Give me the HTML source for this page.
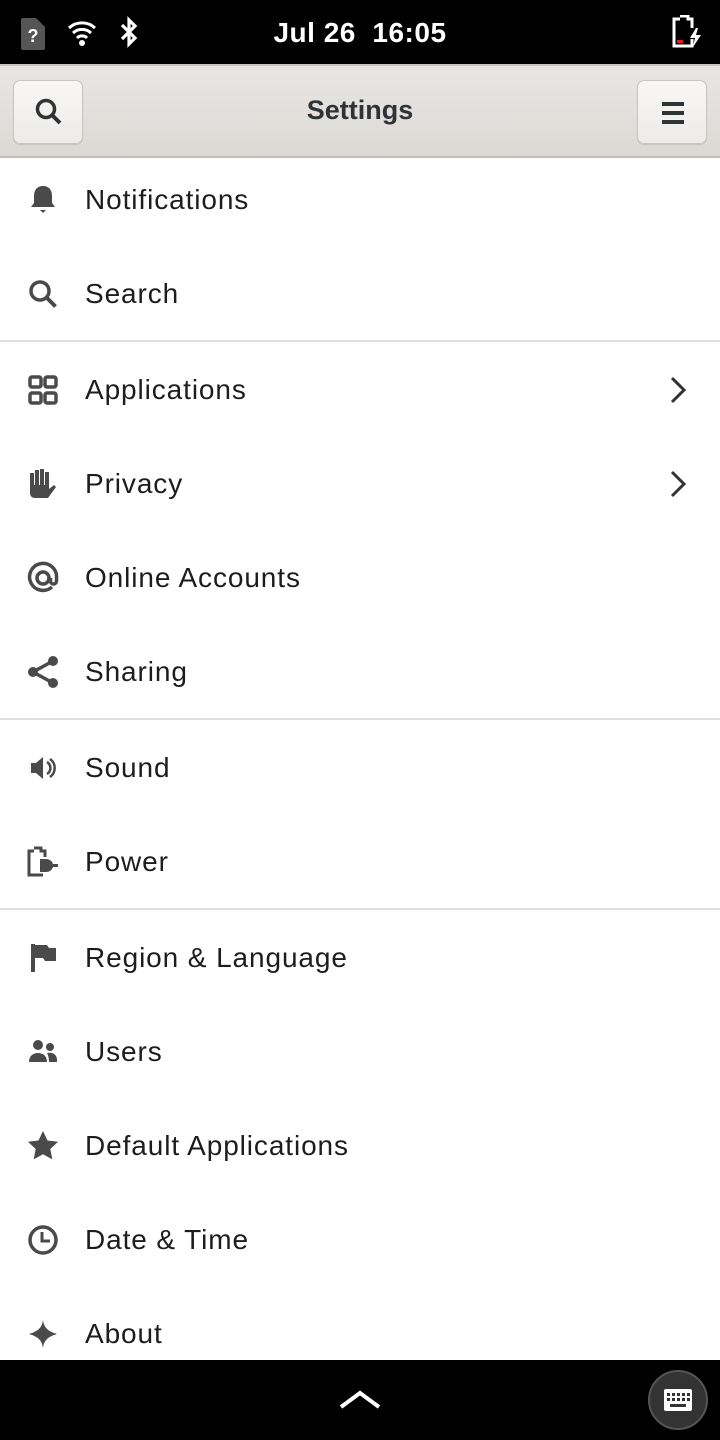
<!DOCTYPE html>
<html><head><meta charset="utf-8"><style>
*{margin:0;padding:0;box-sizing:border-box}
body{width:720px;height:1440px;overflow:hidden;background:#fff;font-family:"Liberation Sans","DejaVu Sans",sans-serif;position:relative;color:#1d1d1d}
.sb{position:absolute;left:0;top:0;width:720px;height:64px;background:#000;color:#fff}
.hb{position:absolute;left:0;top:64px;width:720px;height:94px;background:linear-gradient(#e8e6e3,#dcd9d5);border-top:2px solid #c9c6c2;border-bottom:2px solid #c0bcb7}
.btn{position:absolute;top:14px;width:70px;height:64px;border:1px solid #c9c5c0;border-radius:7px;background:linear-gradient(#f8f7f6,#ecebe9);box-shadow:0 1px 1px rgba(0,0,0,.1)}
.row{position:absolute;left:0;width:720px;height:94px}
.row span{position:absolute;left:85px;top:50%;transform:translateY(-50%);font-size:28px;letter-spacing:.9px}
.row svg{position:absolute;left:26px;top:50%;transform:translateY(-50%)}
.sep{position:absolute;left:0;width:720px;height:2px;background:#dedede}
.chev{position:absolute;left:668px!important}
.bb{position:absolute;left:0;top:1360px;width:720px;height:80px;background:#000}
</style></head><body>
<div class="sb">
<svg width="24" height="32" style="position:absolute;left:21px;top:18px" viewBox="0 0 24 32"><path d="M5 0h10l9 9v21a2 2 0 0 1-2 2H2a2 2 0 0 1-2-2V2a2 2 0 0 1 2-2z" fill="#555"/><text x="12" y="24" font-size="18" font-weight="bold" fill="#fff" text-anchor="middle" font-family="Liberation Sans">?</text></svg>
<svg width="30" height="28" style="position:absolute;left:67px;top:19px" viewBox="0 0 30 28"><path d="M2 9a19 19 0 0 1 26 0M6 14a13 13 0 0 1 18 0M10 19a7 7 0 0 1 10 0" stroke="#fff" stroke-width="3" fill="none"/><circle cx="15" cy="24" r="3" fill="#fff"/></svg>
<svg width="22" height="32" style="position:absolute;left:118px;top:16px" viewBox="0 0 22 32"><path d="M4 9l13 13-6 6V4l6 6-13 13" stroke="#fff" stroke-width="3.2" fill="none"/></svg>
<div style="position:absolute;left:0;width:720px;text-align:center;top:17px;font-size:28px;font-weight:bold;letter-spacing:.5px">Jul 26&nbsp; 16:05</div>
<svg width="32" height="34" style="position:absolute;left:672px;top:15px" viewBox="0 0 32 34"><path d="M8 1h8v3h4v9M20 24v7H2V4h6" stroke="#fff" stroke-width="3" fill="none"/><rect x="5" y="25" width="6" height="3" fill="#e01b24"/><path d="M24 13l-6 10h5l-2 9 8-12h-5l2-7z" fill="#fff"/></svg>
</div>
<div class="hb">
<div class="btn" style="left:13px"><svg width="30" height="30" style="position:absolute;left:20px;top:16px" viewBox="0 0 30 30"><circle cx="12" cy="12" r="8.5" stroke="#2e3436" stroke-width="3.5" fill="none"/><path d="M18 18l8 8" stroke="#2e3436" stroke-width="4"/></svg></div>
<div style="position:absolute;left:0;width:720px;text-align:center;top:29px;font-size:27px;font-weight:bold;color:#2e3436">Settings</div>
<div class="btn" style="left:637px"><svg width="24" height="24" style="position:absolute;left:23px;top:20px" viewBox="0 0 24 24"><path d="M1 3h22M1 12h22M1 21h22" stroke="#2e3436" stroke-width="4"/></svg></div>
</div>

<div class="row" style="top:153px"><svg width="34" height="34" viewBox="0 0 34 34"><path d="M17 3c-6 0-9 4-9 10v7l-3 4h24l-3-4v-7c0-6-3-10-9-10z" fill="#4a4a4a"/><path d="M14 27h6l-3 3z" fill="#4a4a4a"/></svg><span>Notifications</span></div>
<div class="row" style="top:247px"><svg width="34" height="34" viewBox="0 0 34 34"><circle cx="14" cy="14" r="9" stroke="#4a4a4a" stroke-width="3.5" fill="none"/><path d="M20.5 20.5l9 9" stroke="#4a4a4a" stroke-width="4"/></svg><span>Search</span></div>
<div class="sep" style="top:340px"></div>
<div class="row" style="top:343px"><svg width="34" height="34" viewBox="0 0 34 34"><g stroke="#4a4a4a" stroke-width="3.5" fill="none"><rect x="4" y="4" width="11" height="10" rx="2"/><rect x="19" y="4" width="11" height="10" rx="2"/><rect x="4" y="20" width="11" height="10" rx="2"/><rect x="19" y="20" width="11" height="10" rx="2"/></g></svg><span>Applications</span><svg class="chev" width="20" height="30" viewBox="0 0 20 30"><path d="M4 3l12 12-12 12" stroke="#333" stroke-width="3" fill="none"/></svg></div>
<div class="row" style="top:437px"><svg width="34" height="34" viewBox="0 0 34 34"><path d="M4 6h4v12h1V3h4v15h1V2h4v16h1V5h4v17l5-4 2 2-8 11H9c-3 0-5-2-5-5z" fill="#4a4a4a"/></svg><span>Privacy</span><svg class="chev" width="20" height="30" viewBox="0 0 20 30"><path d="M4 3l12 12-12 12" stroke="#333" stroke-width="3" fill="none"/></svg></div>
<div class="row" style="top:531px"><svg width="34" height="34" viewBox="0 0 34 34"><path d="M26 26A13.5 13.5 0 1 1 30.5 17v3a3 3 0 0 1-6 0v-3" stroke="#4a4a4a" stroke-width="3.5" fill="none"/><circle cx="17" cy="17" r="6" stroke="#4a4a4a" stroke-width="3.5" fill="none"/></svg><span>Online Accounts</span></div>
<div class="row" style="top:625px"><svg width="34" height="34" viewBox="0 0 34 34"><path d="M7 17L27 6M7 17l20 11" stroke="#4a4a4a" stroke-width="3.5"/><circle cx="7" cy="17" r="5" fill="#4a4a4a"/><circle cx="27" cy="6" r="5" fill="#4a4a4a"/><circle cx="27" cy="28" r="5" fill="#4a4a4a"/></svg><span>Sharing</span></div>
<div class="sep" style="top:718px"></div>
<div class="row" style="top:721px"><svg width="34" height="34" viewBox="0 0 34 34"><path d="M5 12h5l7-6v22l-7-6H5z" fill="#4a4a4a"/><path d="M21 11a7 7 0 0 1 0 12M24 8a11 11 0 0 1 0 18" stroke="#4a4a4a" stroke-width="2.5" fill="none"/></svg><span>Sound</span></div>
<div class="row" style="top:815px"><svg width="34" height="34" viewBox="0 0 34 34"><path d="M8 3h7v3h4v6M17 30H3V6h5" stroke="#4a4a4a" stroke-width="3" fill="none"/><path d="M14 14h6a7 7 0 0 1 7 5h5v3h-5a7 7 0 0 1-7 5h-6z" fill="#4a4a4a"/></svg><span>Power</span></div>
<div class="sep" style="top:908px"></div>
<div class="row" style="top:911px"><svg width="34" height="34" viewBox="0 0 34 34"><path d="M5 3h4v28H5z" fill="#4a4a4a"/><path d="M9 4h12l2 3h7v13H19l-2-3H9z" fill="#4a4a4a"/></svg><span>Region &amp; Language</span></div>
<div class="row" style="top:1005px"><svg width="34" height="34" viewBox="0 0 34 34"><circle cx="12" cy="10" r="5" fill="#4a4a4a"/><circle cx="24" cy="12" r="4" fill="#4a4a4a"/><path d="M3 27c0-6 4-9 9-9s9 3 9 9z" fill="#4a4a4a"/><path d="M21 18c5-1 10 1 10 7v2h-8c0-4-1-7-2-9z" fill="#4a4a4a"/></svg><span>Users</span></div>
<div class="row" style="top:1099px"><svg width="34" height="34" viewBox="0 0 34 34"><path d="M17 2l4.5 9.5 10.5 1.3-7.7 7.2 2 10.4L17 25.3 7.7 30.4l2-10.4L2 12.8l10.5-1.3z" fill="#4a4a4a"/></svg><span>Default Applications</span></div>
<div class="row" style="top:1193px"><svg width="34" height="34" viewBox="0 0 34 34"><circle cx="17" cy="17" r="13" stroke="#4a4a4a" stroke-width="3.5" fill="none"/><path d="M16 9v9h8" stroke="#4a4a4a" stroke-width="3" fill="none"/></svg><span>Date &amp; Time</span></div>
<div class="row" style="top:1287px"><svg width="34" height="34" viewBox="0 0 34 34"><path d="M17 3c1 7 4 11 14 14-10 3-13 7-14 14-1-7-4-11-14-14 10-3 13-7 14-14z" fill="#4a4a4a"/></svg><span>About</span></div>

<div class="bb">
<svg width="44" height="24" style="position:absolute;left:338px;top:28px" viewBox="0 0 44 24"><path d="M3 19L22 5l19 14" stroke="#fff" stroke-width="4" fill="none"/></svg>
<div style="position:absolute;left:648px;top:10px;width:60px;height:60px;border-radius:50%;background:#333;border:2px solid #555"></div>
<svg width="30" height="24" style="position:absolute;left:663px;top:28px" viewBox="0 0 30 24"><rect x="1" y="1" width="28" height="22" rx="2" fill="#fff"/><g fill="#333"><rect x="4" y="5" width="3" height="3"/><rect x="9" y="5" width="3" height="3"/><rect x="14" y="5" width="3" height="3"/><rect x="19" y="5" width="3" height="3"/><rect x="24" y="5" width="3" height="3"/><rect x="4" y="10" width="3" height="3"/><rect x="9" y="10" width="3" height="3"/><rect x="14" y="10" width="3" height="3"/><rect x="19" y="10" width="3" height="3"/><rect x="24" y="10" width="3" height="3"/><rect x="7" y="16" width="16" height="3"/></g></svg>
</div>
</body></html>
